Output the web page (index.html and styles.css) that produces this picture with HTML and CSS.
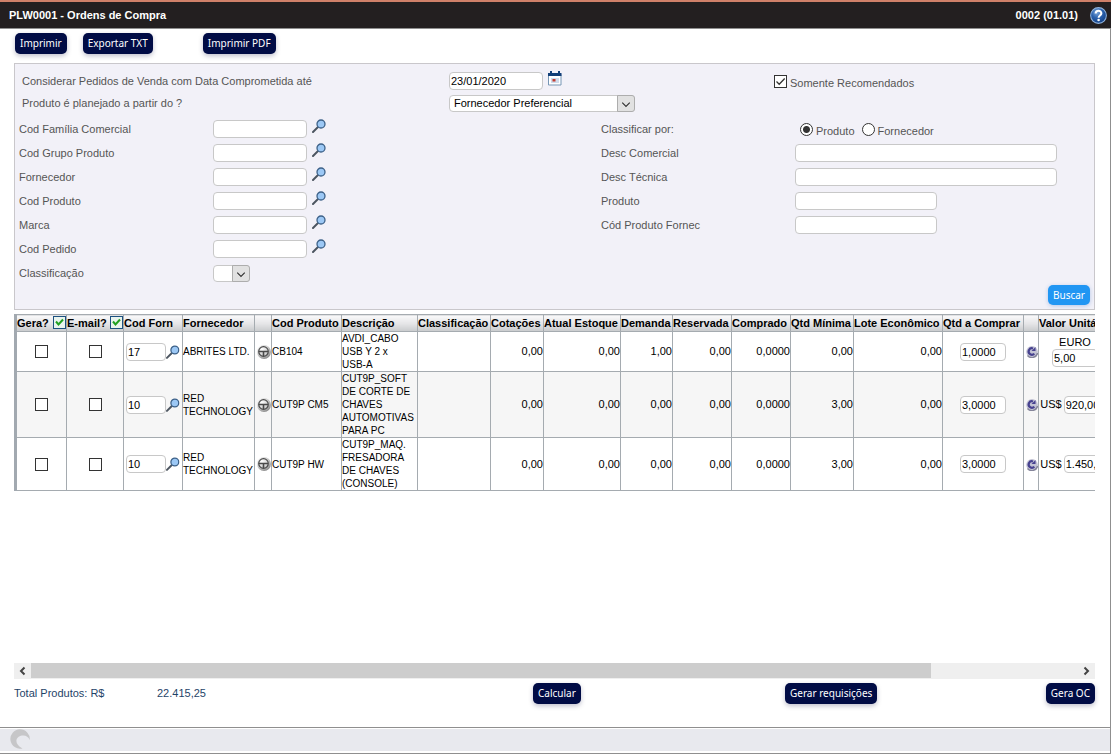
FILE: index.html
```html
<!DOCTYPE html>
<html lang="pt-BR">
<head>
<meta charset="utf-8">
<title>PLW0001 - Ordens de Compra</title>
<link rel="stylesheet" href="styles.css">
</head>
<body>
<svg class="defs" aria-hidden="true">
  <defs>
    <radialGradient id="ball" cx="35%" cy="30%" r="75%"><stop offset="0" stop-color="#fff"/><stop offset=".6" stop-color="#d0d0d0"/><stop offset="1" stop-color="#858585"/></radialGradient>
    <radialGradient id="blue" cx="40%" cy="30%" r="70%"><stop offset="0" stop-color="#7fa9dc"/><stop offset=".5" stop-color="#2c62ad"/><stop offset="1" stop-color="#123f85"/></radialGradient>
    <symbol id="lens" viewBox="0 0 14 14"><path d="M1 13 6 8" stroke="#4c5560" stroke-width="2" stroke-linecap="round"/><circle cx="9" cy="5" r="4" fill="#9cc8f5" stroke="#3d6188" stroke-width="1.3"/></symbol>
    <symbol id="wheel" viewBox="0 0 14 14"><circle cx="7" cy="7" r="6.9" fill="url(#ball)"/><circle cx="6.500" cy="6.500" r="4.8" fill="none" stroke="#4a4a4a" stroke-width="1.2"/><path d="M2 6.500h9M6.500 6.500v4.500" stroke="#4a4a4a" stroke-width="1.6"/></symbol>
    <symbol id="redo" viewBox="0 0 12 13"><circle cx="6" cy="6.800" r="5.8" fill="#c3c3d4"/><path d="M1.500 10.500A5.800 5.800 0 0 0 11.600 8" fill="none" stroke="#85859a" stroke-width="1.4"/><path d="M8.300 8.600A3.200 3.200 0 1 1 7 3.500" fill="none" stroke="#46418f" stroke-width="2.2"/><path d="M5.500 6H9.500V2z" fill="#46418f"/></symbol>
  </defs>
</svg>
<header class="titlebar">
  <h1>PLW0001 - Ordens de Compra</h1>
  <span class="version">0002 (01.01)</span>
  <button class="help" aria-label="Ajuda"><svg viewBox="0 0 16 16"><circle cx="8" cy="8" r="7.4" fill="url(#blue)" stroke="#8fb2dc"/><path d="M5.3 6.2C5.3 2.6 10.8 2.8 10.7 6 10.6 7.9 8.1 8 8.1 10" fill="none" stroke="#fff" stroke-width="1.9"/><circle cx="8.1" cy="12.2" r="1.2" fill="#fff"/></svg></button>
</header>
<main class="page">
  <nav class="toolbar">
    <button class="btn">Imprimir</button>
    <button class="btn">Exportar TXT</button>
    <button class="btn apart">Imprimir PDF</button>
  </nav>
  <form class="filters">
    <div class="top">
      <label for="data">Considerar Pedidos de Venda com Data Comprometida até</label>
      <div class="field"><input class="text code" id="data" type="text" value="23/01/2020">
        <button class="icon" type="button" aria-label="Calendário"><svg class="cal" viewBox="0 0 14 15"><path d="M.5 3.5h12.500v10.500H.5z" fill="#fff" stroke="#7797b5"/><path d="M0 2h13.500v3H0z" fill="#123f78"/><path d="M2 0h2v3H2zM10 0h2v3h-2z" fill="#123f78"/><path d="M3 7h8v5H3z" fill="#cfdcec"/><path d="M4.500 8h3v2.500h-3z" fill="#c23b31"/></svg></button></div>
      <div class="field check"><input type="checkbox" id="rec" checked><label for="rec">Somente Recomendados</label></div>
      <label for="plan">Produto é planejado a partir do ?</label>
      <div class="field"><span class="select wide"><select id="plan"><option>Fornecedor Preferencial</option></select><svg viewBox="0 0 17 15"><path d="m4.500 6.500 4 4 4-4"/></svg></span></div>
    </div>
    <div class="grid">
      <label for="familia">Cod Família Comercial</label>
      <div class="field"><input class="text code" id="familia" type="text"><button class="icon" type="button" aria-label="Pesquisar"><svg class="lens"><use href="#lens"/></svg></button></div>
      <span id="ordem">Classificar por:</span>
      <div class="field radios" role="radiogroup" aria-labelledby="ordem"><input type="radio" name="ordem" id="r1" checked><label for="r1">Produto</label><input type="radio" name="ordem" id="r2"><label for="r2">Fornecedor</label></div>

      <label for="grupo">Cod Grupo Produto</label>
      <div class="field"><input class="text code" id="grupo" type="text"><button class="icon" type="button" aria-label="Pesquisar"><svg class="lens"><use href="#lens"/></svg></button></div>
      <label for="dcom">Desc Comercial</label>
      <div class="field"><input class="text long" id="dcom" type="text"></div>

      <label for="forn">Fornecedor</label>
      <div class="field"><input class="text code" id="forn" type="text"><button class="icon" type="button" aria-label="Pesquisar"><svg class="lens"><use href="#lens"/></svg></button></div>
      <label for="dtec">Desc Técnica</label>
      <div class="field"><input class="text long" id="dtec" type="text"></div>

      <label for="cprod">Cod Produto</label>
      <div class="field"><input class="text code" id="cprod" type="text"><button class="icon" type="button" aria-label="Pesquisar"><svg class="lens"><use href="#lens"/></svg></button></div>
      <label for="prod">Produto</label>
      <div class="field"><input class="text mid" id="prod" type="text"></div>

      <label for="marca">Marca</label>
      <div class="field"><input class="text code" id="marca" type="text"><button class="icon" type="button" aria-label="Pesquisar"><svg class="lens"><use href="#lens"/></svg></button></div>
      <label for="cpf">Cód Produto Fornec</label>
      <div class="field"><input class="text mid" id="cpf" type="text"></div>

      <label for="pedido">Cod Pedido</label>
      <div class="field full"><input class="text code" id="pedido" type="text"><button class="icon" type="button" aria-label="Pesquisar"><svg class="lens"><use href="#lens"/></svg></button></div>

      <label for="classif">Classificação</label>
      <div class="field full"><span class="select small"><select id="classif"><option></option></select><svg viewBox="0 0 17 15"><path d="m4.500 6.500 4 4 4-4"/></svg></span></div>
    </div>
    <button class="btn search" type="button">Buscar</button>
  </form>

  <div class="tablebox">
    <table>
      <colgroup><col class="w51"><col class="w57"><col class="w59"><col class="w72"><col class="w17"><col class="w70"><col class="w76"><col class="w73"><col class="w53"><col class="w77"><col class="w52"><col class="w59"><col class="w59"><col class="w63"><col class="w89"><col class="w81"><col class="w15"><col class="w73"></colgroup>
      <thead><tr>
        <th><span class="all"><label for="ag">Gera?</label><input type="checkbox" id="ag" checked></span></th>
        <th><span class="all"><label for="ae">E-mail?</label><input type="checkbox" id="ae" checked></span></th>
        <th>Cod Forn</th><th>Fornecedor</th><th></th><th>Cod Produto</th><th>Descrição</th><th>Classificação</th><th>Cotações</th><th>Atual Estoque</th><th>Demanda</th><th>Reservada</th><th>Comprado</th><th>Qtd Mínima</th><th>Lote Econômico</th><th>Qtd a Comprar</th><th></th><th>Valor Unitário</th>
      </tr></thead>
      <tbody>
        <tr>
          <td class="mid-cell"><input type="checkbox" aria-label="Gera"></td><td class="mid-cell"><input type="checkbox" aria-label="E-mail"></td>
          <td><span class="lookup"><input class="text" type="text" value="17" aria-label="Cod Forn"><svg class="lens"><use href="#lens"/></svg></span></td>
          <td class="name">ABRITES LTD.</td><td><svg class="wheel"><use href="#wheel"/></svg></td><td class="name">CB104</td><td class="name">AVDI_CABO USB Y 2 x <span class="keep">USB-A</span></td><td></td>
          <td class="num">0,00</td><td class="num">0,00</td><td class="num">1,00</td><td class="num">0,00</td><td class="num">0,0000</td><td class="num">0,00</td><td class="num">0,00</td>
          <td class="mid-cell"><input class="text qty" type="text" value="1,0000" aria-label="Qtd a Comprar"></td><td><svg class="redo"><use href="#redo"/></svg></td>
          <td><span class="price">EURO <input class="text qty" type="text" value="5,00" aria-label="Valor Unitário"></span></td>
        </tr>
        <tr>
          <td class="mid-cell"><input type="checkbox" aria-label="Gera"></td><td class="mid-cell"><input type="checkbox" aria-label="E-mail"></td>
          <td><span class="lookup"><input class="text" type="text" value="10" aria-label="Cod Forn"><svg class="lens"><use href="#lens"/></svg></span></td>
          <td class="name">RED TECHNOLOGY</td><td><svg class="wheel"><use href="#wheel"/></svg></td><td class="name">CUT9P CM5</td><td class="name">CUT9P_SOFT DE CORTE DE CHAVES AUTOMOTIVAS PARA PC</td><td></td>
          <td class="num">0,00</td><td class="num">0,00</td><td class="num">0,00</td><td class="num">0,00</td><td class="num">0,0000</td><td class="num">3,00</td><td class="num">0,00</td>
          <td class="mid-cell"><input class="text qty" type="text" value="3,0000" aria-label="Qtd a Comprar"></td><td><svg class="redo"><use href="#redo"/></svg></td>
          <td><span class="price">US$ <input class="text qty" type="text" value="920,00" aria-label="Valor Unitário"></span></td>
        </tr>
        <tr>
          <td class="mid-cell"><input type="checkbox" aria-label="Gera"></td><td class="mid-cell"><input type="checkbox" aria-label="E-mail"></td>
          <td><span class="lookup"><input class="text" type="text" value="10" aria-label="Cod Forn"><svg class="lens"><use href="#lens"/></svg></span></td>
          <td class="name">RED TECHNOLOGY</td><td><svg class="wheel"><use href="#wheel"/></svg></td><td class="name">CUT9P HW</td><td class="name">CUT9P_MAQ. FRESADORA DE CHAVES (CONSOLE)</td><td></td>
          <td class="num">0,00</td><td class="num">0,00</td><td class="num">0,00</td><td class="num">0,00</td><td class="num">0,0000</td><td class="num">3,00</td><td class="num">0,00</td>
          <td class="mid-cell"><input class="text qty" type="text" value="3,0000" aria-label="Qtd a Comprar"></td><td><svg class="redo"><use href="#redo"/></svg></td>
          <td><span class="price">US$ <input class="text qty" type="text" value="1.450,00" aria-label="Valor Unitário"></span></td>
        </tr>
      </tbody>
    </table>
  </div>
  <div class="scrollbar">
    <button aria-label="Rolar para a esquerda"><svg viewBox="0 0 17 16"><path d="M10.500 4.500 7 8l3.500 3.500"/></svg></button>
    <div class="track"><div class="thumb"></div></div>
    <button aria-label="Rolar para a direita"><svg viewBox="0 0 17 16"><path d="M6.500 4.500 10 8l-3.500 3.500"/></svg></button>
  </div>
  <div class="actions">
    <span>Total Produtos: R$</span><span>22.415,25</span>
    <button class="btn">Calcular</button><button class="btn">Gerar requisições</button><button class="btn last">Gera OC</button>
  </div>
</main>
<footer class="status"><div class="statusfill"><svg viewBox="0 0 20 20"><path d="M12.500 19.400A9.700 9.700 0 1 1 19.700 11C18.500 7.500 15.500 6 12 6.500 5.500 7.500 3.500 15 12.500 19.400z" fill="#c6c6c8"/></svg></div></footer>
</body>
</html>
```
FILE: styles.css
```css
* { box-sizing: border-box; }
body {
  margin: 0;
  min-height: 100vh;
  display: flex;
  flex-direction: column;
  background: #fff;
  color: #000;
  font: 11px/13px "Liberation Sans", Arial, sans-serif;
}
.defs { position: absolute; width: 0; height: 0; }
svg { display: block; }
button, input, select { font: inherit; margin: 0; }
button { cursor: pointer; }

.titlebar {
  display: flex;
  align-items: center;
  height: 29px;
  padding: 0 4px 0 9px;
  background: #231f20;
  border-top: 2px solid #cf8069;
  border-bottom: 1px solid #8f8f8f;
  color: #fff;
  font-weight: bold;
}
.titlebar h1 { margin: 0; flex: 1; font-size: 11px; }
.help { margin-left: 12px; padding: 0; border: 0; background: none; }
.help svg { width: 17px; height: 17px; }

.page {
  flex: 1;
  display: flex;
  flex-direction: column;
  padding: 0 15px 0 14px;
  border-right: 1px solid #8f8f8f;
}
.toolbar { display: flex; gap: 16px; padding: 4px 0 9px 1px; }
.btn {
  height: 21px;
  padding: 0 5px;
  border: 0;
  border-radius: 5px;
  background: #010c45;
  box-shadow: 0 2px 5px rgba(0, 0, 60, .25);
  color: #fff;
  font: 10px/19px "Noto Sans", sans-serif;
  white-space: nowrap;
}
.apart { margin-left: 34px; }

.filters {
  display: flex;
  flex-direction: column;
  padding: 6px 4px 4px;
  border: 1px solid #c9c7cb;
  background: #f2f1f8;
  color: #555;
}
.top, .grid { display: grid; align-items: center; }
.top {
  grid-template-columns: 427fr 325fr 316fr;
  grid-auto-rows: 22px;
  margin-bottom: 3px;
  padding-left: 3px;
}
.grid {
  grid-template-columns: 194fr 388fr 194fr 295fr;
  grid-auto-rows: 24px;
}
.field { display: flex; align-items: center; gap: 5px; min-width: 0; }
.full { grid-column: 2 / -1; }
.check, .radios { gap: 3px; }
.radios { padding-left: 5px; }
.radios input + label { margin-right: 4px; }
.check label, .radios label { padding-top: 4px; }

.text {
  height: 18px;
  padding: 0 1px;
  border: 1px solid #c8c8c8;
  border-radius: 4px;
  background: #fff;
  color: #000;
  min-width: 0;
}
.code { width: 94px; }
.long { width: 262px; }
.mid { width: 142px; }
.icon { padding: 0 0 6px; border: 0; background: none; }
.lens { width: 14px; height: 14px; fill: none; }
.cal { width: 14px; height: 15px; }

.select { position: relative; display: inline-flex; }
.select select {
  appearance: none;
  width: 100%;
  height: 17px;
  padding: 0 18px 0 4px;
  border: 1px solid #c8c8c8;
  border-radius: 4px;
  background: #fff;
  color: #000;
}
.select svg {
  position: absolute;
  top: 0;
  right: 0;
  width: 18px;
  height: 17px;
  border: 1px solid #adadad;
  border-radius: 0 3px 3px 0;
  background: #e1e1e1;
  fill: none;
  stroke: #333;
  stroke-width: 1.3;
  pointer-events: none;
}
.wide { width: 186px; }
.small { width: 37px; }

input[type="checkbox"], input[type="radio"] {
  appearance: none;
  flex: none;
  width: 13px;
  height: 13px;
  border: 1px solid #333;
  background: #fff;
}
input[type="checkbox"]:checked {
  background: #fff url("data:image/svg+xml,%3Csvg xmlns='http://www.w3.org/2000/svg' viewBox='0 0 11 11'%3E%3Cpath d='m1.500 5.500 2.700 2.700L9.700 2.500' fill='none' stroke='%23333' stroke-width='1.300'/%3E%3C/svg%3E") center / 11px;
}
input[type="radio"] { border-radius: 50%; }
input[type="radio"]:checked { background: radial-gradient(circle, #333 3px, #fff 4px); }

.search {
  align-self: flex-end;
  height: 20px;
  background: #2196f3;
  box-shadow: 0 1px 4px rgba(33, 100, 200, .3);
}

.tablebox { flex: 1; margin-top: 4px; overflow: hidden; }
table {
  table-layout: fixed;
  width: 1097px;
  border-collapse: collapse;
}
th, td { padding: 0; border: 1px solid #a5abb0; }
th {
  height: 17px;
  background: linear-gradient(#fafafa, #e6e6e8 50%, #c8cacc);
  text-align: left;
  white-space: nowrap;
}
th:first-child, td:first-child { border-left: 3px solid #a2a9b0; }
tbody tr:nth-child(even) { background: #f6f6f6; }
.w15 { width: 15px; }
.w17 { width: 17px; }
.w51 { width: 51px; }
.w52 { width: 52px; }
.w53 { width: 53px; }
.w57 { width: 57px; }
.w59 { width: 59px; }
.w63 { width: 63px; }
.w70 { width: 70px; }
.w72 { width: 72px; }
.w73 { width: 73px; }
.w76 { width: 76px; }
.w77 { width: 77px; }
.w81 { width: 81px; }
.w89 { width: 89px; }
.name { font-size: 10px; }
.keep { white-space: nowrap; }
.num { text-align: right; }
.mid-cell { text-align: center; }
.mid-cell input { vertical-align: middle; }
.all { display: flex; justify-content: space-between; align-items: flex-start; height: 15px; }
.all label { padding-top: 1px; }
.all input[type="checkbox"]:checked {
  border-color: #1c5180;
  background: #e9f4ee url("data:image/svg+xml,%3Csvg xmlns='http://www.w3.org/2000/svg' viewBox='0 0 11 11'%3E%3Cpath d='m2 4.500 2.500 3L9 2.500' fill='none' stroke='%2321a121' stroke-width='2'/%3E%3C/svg%3E") center / 11px;
}
.lookup { display: flex; align-items: center; justify-content: space-between; padding: 0 2px; }
.lookup .text { width: 41px; }
.wheel { width: 14px; height: 14px; margin-left: auto; }
.redo { width: 12px; height: 13px; margin-left: auto; }
.qty { width: 46px; }
.price { display: flex; flex-wrap: wrap; align-items: center; justify-content: center; column-gap: 2px; }

.scrollbar { display: flex; height: 16px; background: #efefef; }
.scrollbar button { width: 17px; padding: 0; border: 0; background: none; }
.scrollbar svg { width: 17px; height: 16px; fill: none; stroke: #444; stroke-width: 2; }
.track { flex: 1; }
.thumb { width: 86%; height: 15px; background: #cdcdcd; }

.actions {
  display: grid;
  grid-template-columns: 143fr 376fr 252fr 260fr 50fr;
  align-items: center;
  justify-items: start;
  padding: 4px 0 23px;
  color: #1f4468;
}
.last { justify-self: end; }

.status {
  height: 27px;
  padding: 1px 0 2px;
  border: 1px solid #8f8f8f;
  border-left: 0;
}
.statusfill { height: 100%; padding-left: 10px; background: #e8e9ee; }
.statusfill svg { width: 20px; height: 20px; }
```
